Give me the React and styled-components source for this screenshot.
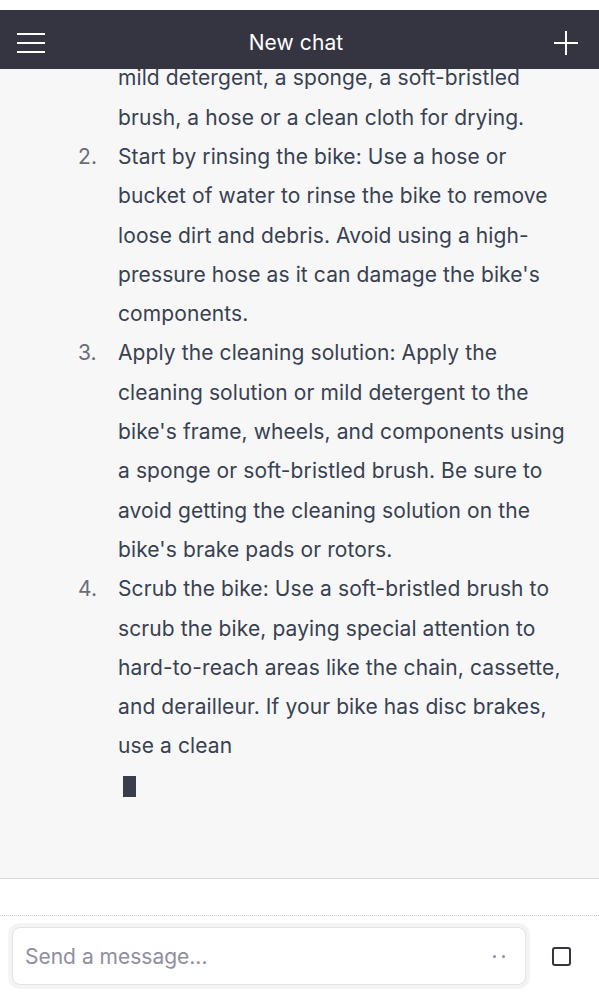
import React from 'react'
import styled, { createGlobalStyle } from 'styled-components'

const GlobalStyle = createGlobalStyle`
  html, body {
    margin: 0;
    padding: 0;
    background: #ffffff;
  }
  body {
    font-family: Inter, "Noto Sans", "Liberation Sans", sans-serif;
    -webkit-font-smoothing: antialiased;
  }
`

const Page = styled.div`
  width: 599px;
  height: 1001px;
  display: flex;
  flex-direction: column;
  padding-top: 10px;
  box-sizing: border-box;
  background: #fff;
  overflow: hidden;
`

const TopBar = styled.header`
  height: 59px;
  flex: none;
  box-sizing: border-box;
  padding-top: 6px;
  background: #343541;
  display: grid;
  grid-template-columns: 60px 1fr 60px;
  align-items: center;
  color: #fff;
  position: relative;
  z-index: 2;
`

const BarButton = styled.button`
  background: none;
  border: 0;
  padding: 0;
  color: #fff;
  display: flex;
  align-items: center;
  justify-content: ${(p) => p.$align || 'center'};
  height: 100%;
  padding-left: ${(p) => p.$pl || 0}px;
  padding-right: ${(p) => p.$pr || 0}px;
`

const Title = styled.h1`
  margin: 0;
  padding-right: 7px;
  text-align: center;
  font-size: 21px;
  font-weight: 400;
  letter-spacing: 0.1px;
`

const Thread = styled.main`
  flex: none;
  height: 809px;
  background: #f7f7f8;
  border-bottom: 1px solid #d9d9dd;
  overflow: hidden;
`

const Answer = styled.div`
  margin-top: -10.6px;
  color: #374151;
  font-size: 21px;
  line-height: 39.3px;
  letter-spacing: 0.1px;
`

const Steps = styled.ol`
  margin: 0;
  padding: 0;
  list-style: none;
`

const Step = styled.li`
  display: grid;
  grid-template-columns: 118px 1fr;
`

const Num = styled.span`
  color: #6b6c7b;
  padding-left: 78px;
`

const Line = styled.span`
  display: block;
  white-space: nowrap;
`

const Cursor = styled.span`
  display: block;
  width: 13px;
  height: 21px;
  margin: 10px 0 0 123px;
  background: #3a3d4a;
`

const Spacer = styled.div`
  height: 36px;
  flex: none;
  border-bottom: 1px dotted #cfcfd4;
`

const Composer = styled.div`
  display: flex;
  align-items: center;
  padding: 11px 0 0 12px;
`

const InputBox = styled.div`
  width: 514px;
  height: 58px;
  box-sizing: border-box;
  border: 1px solid #e2e2e6;
  border-radius: 8px;
  box-shadow: 0 0 0 4px #f4f4f5;
  background: #fff;
  display: flex;
  align-items: center;
  padding: 0 20px 0 12px;
`

const Placeholder = styled.span`
  flex: 1;
  color: #8e8ea0;
  font-size: 21px;
`

const Dots = styled.span`
  display: flex;
  gap: 6px;
`

const Dot = styled.i`
  width: 3px;
  height: 3px;
  border-radius: 50%;
  background: #8e8ea0;
`

const StopButton = styled.button`
  padding: 0;
  margin-left: 26px;
  width: 19px;
  height: 19px;
  box-sizing: border-box;
  background: none;
  border: 2px solid #343541;
  border-radius: 3px;
`

const intro = [
  'mild detergent, a sponge, a soft-bristled',
  'brush, a hose or a clean cloth for drying.',
]

const steps = [
  {
    n: '2.',
    lines: [
      'Start by rinsing the bike: Use a hose or',
      'bucket of water to rinse the bike to remove',
      'loose dirt and debris. Avoid using a high-',
      "pressure hose as it can damage the bike's",
      'components.',
    ],
  },
  {
    n: '3.',
    lines: [
      'Apply the cleaning solution: Apply the',
      'cleaning solution or mild detergent to the',
      "bike's frame, wheels, and components using",
      'a sponge or soft-bristled brush. Be sure to',
      'avoid getting the cleaning solution on the',
      "bike's brake pads or rotors.",
    ],
  },
  {
    n: '4.',
    lines: [
      'Scrub the bike: Use a soft-bristled brush to',
      'scrub the bike, paying special attention to',
      'hard-to-reach areas like the chain, cassette,',
      'and derailleur. If your bike has disc brakes,',
      'use a clean',
    ],
  },
]

export default function App() {
  return (
    <Page>
      <GlobalStyle />
      <TopBar>
        <BarButton $align="flex-start" $pl={17}>
          <svg width="28" height="22" viewBox="0 0 28 22" fill="none" stroke="#fff" strokeWidth="2">
            <line x1="0" y1="2" x2="28" y2="2" />
            <line x1="0" y1="11" x2="28" y2="11" />
            <line x1="0" y1="20" x2="28" y2="20" />
          </svg>
        </BarButton>
        <Title>New chat</Title>
        <BarButton $align="flex-end" $pr={21}>
          <svg width="24" height="24" viewBox="0 0 24 24" fill="none" stroke="#fff" strokeWidth="2">
            <line x1="12" y1="0" x2="12" y2="24" />
            <line x1="0" y1="12" x2="24" y2="12" />
          </svg>
        </BarButton>
      </TopBar>
      <Thread>
        <Answer>
          <Steps>
            <Step>
              <Num />
              <span>
                {intro.map((l) => (
                  <Line key={l}>{l}</Line>
                ))}
              </span>
            </Step>
            {steps.map((s) => (
              <Step key={s.n}>
                <Num>{s.n}</Num>
                <span>
                  {s.lines.map((l) => (
                    <Line key={l}>{l}</Line>
                  ))}
                </span>
              </Step>
            ))}
          </Steps>
          <Cursor />
        </Answer>
      </Thread>
      <Spacer />
      <Composer>
        <InputBox>
          <Placeholder>Send a message...</Placeholder>
          <Dots>
            <Dot />
            <Dot />
          </Dots>
        </InputBox>
        <StopButton aria-label="stop" />
      </Composer>
    </Page>
  )
}
